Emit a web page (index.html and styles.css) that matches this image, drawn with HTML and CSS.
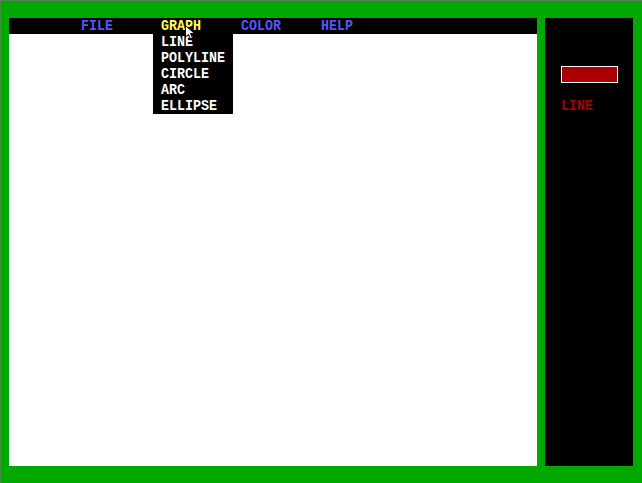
FILE: index.html
```html
<!DOCTYPE html>
<html>
<head>
<meta charset="utf-8">
<link rel="stylesheet" href="styles.css">
</head>
<body>
<div class="screen">
  <div class="canvas">
    <div class="menubar">
      <div class="menu"><span class="label">FILE</span></div>
      <div class="menu open"><span class="label active">GRAPH</span>
        <ul class="dropdown">
          <li>LINE</li>
          <li>POLYLINE</li>
          <li>CIRCLE</li>
          <li>ARC</li>
          <li>ELLIPSE</li>
        </ul>
      </div>
      <div class="menu"><span class="label">COLOR</span></div>
      <div class="menu"><span class="label">HELP</span></div>
    </div>
    <div class="drawing"></div>
    <svg class="cursor" width="12" height="16" viewBox="0 0 12 16">
      <path d="M0.5 0.5 L0.5 12 L3.5 9.5 L5.5 14 L7.5 13 L5.5 8.5 L9.5 8.5 Z" fill="#fff" stroke="#000" stroke-width="1"/>
    </svg>
  </div>
  <div class="panel">
    <div class="swatch"></div>
    <div class="mode">LINE</div>
  </div>
</div>
</body>
</html>
```
FILE: styles.css
```css
html, body {
  margin: 0;
  padding: 0;
  width: 642px;
  height: 483px;
  overflow: hidden;
  background: #00a800;
}
.screen {
  box-sizing: border-box;
  width: 642px;
  height: 483px;
  border-top: 1px solid #5a7f5a;
  border-left: 1px solid #3f8f3f;
  padding: 17px 9px 17px 8px;
  display: flex;
  gap: 8px;
  font-family: "Liberation Mono", "DejaVu Sans Mono", monospace;
  font-weight: bold;
  font-size: 13.33px;
  line-height: 16px;
}
.canvas {
  position: relative;
  width: 528px;
  height: 448px;
  background: #fff;
  display: flex;
  flex-direction: column;
}
.menubar {
  height: 16px;
  background: #000;
  display: flex;
  padding-left: 64px;
}
.menu {
  position: relative;
  width: 80px;
  padding-left: 8px;
  box-sizing: border-box;
}
.label {
  color: #5555ff;
  display: block;
  transform: translateY(1px) scaleY(1.15);
}
.label.active {
  color: #ffff55;
}
.dropdown {
  position: absolute;
  top: 16px;
  left: 0;
  width: 80px;
  margin: 0;
  padding: 0 0 0 8px;
  box-sizing: border-box;
  list-style: none;
  background: #000;
  color: #fff;
}
.dropdown li {
  height: 16px;
  transform: translateY(1px) scaleY(1.15);
}
.drawing {
  flex: 1;
}
.cursor {
  position: absolute;
  left: 176px;
  top: 7px;
}
.panel {
  width: 88px;
  height: 448px;
  background: #000;
  box-sizing: border-box;
  padding: 48px 0 0 16px;
  display: flex;
  flex-direction: column;
  gap: 15px;
}
.swatch {
  width: 57px;
  height: 17px;
  box-sizing: border-box;
  border: 1px solid #fff;
  background: #aa0000;
}
.mode {
  color: #aa0000;
  transform: translateY(1px) scaleY(1.15);
}
```
